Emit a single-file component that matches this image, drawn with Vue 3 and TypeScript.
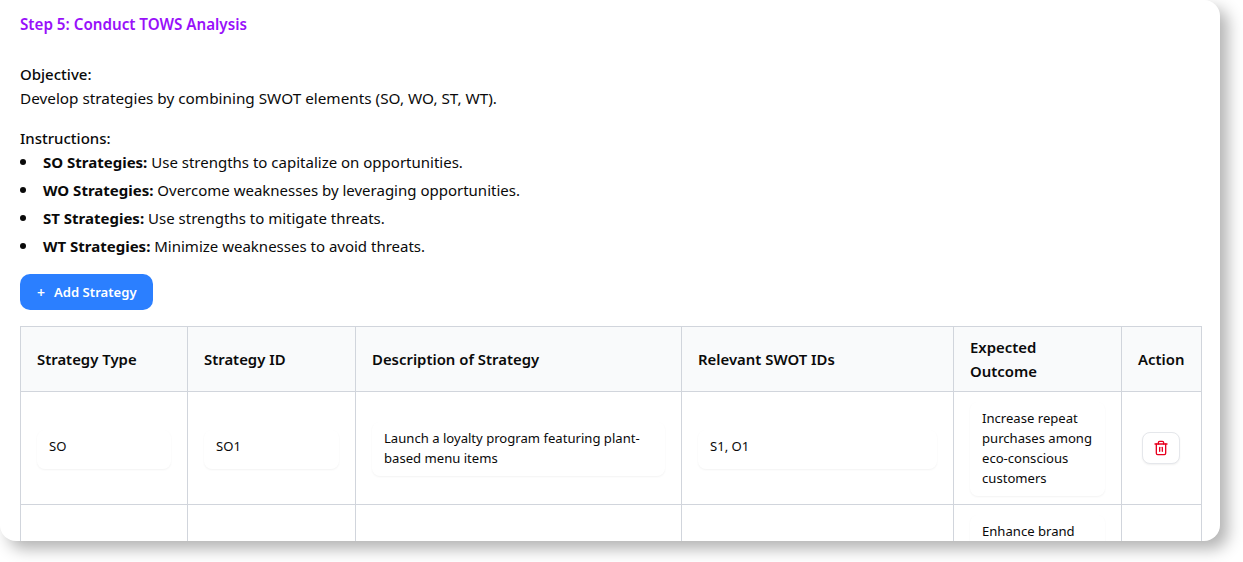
<script setup lang="ts">
interface Row { type: string; id: string; desc: string; swot: string; outcome: string }
const rows: Row[] = [
  { type: 'SO', id: 'SO1', desc: 'Launch a loyalty program featuring plant-based menu items', swot: 'S1, O1', outcome: 'Increase repeat purchases among eco-conscious customers' },
  { type: '', id: '', desc: '', swot: '', outcome: 'Enhance brand' },
]
const items = [
  { label: 'SO Strategies:', text: 'Use strengths to capitalize on opportunities.' },
  { label: 'WO Strategies:', text: 'Overcome weaknesses by leveraging opportunities.' },
  { label: 'ST Strategies:', text: 'Use strengths to mitigate threats.' },
  { label: 'WT Strategies:', text: 'Minimize weaknesses to avoid threats.' },
]
</script>

<template>
  <div class="page">
    <section class="card">
      <h2 class="title">Step 5: Conduct TOWS Analysis</h2>
      <p class="label obj">Objective:</p>
      <p class="body">Develop strategies by combining SWOT elements (SO, WO, ST, WT).</p>
      <p class="label ins">Instructions:</p>
      <ul class="list">
        <li v-for="it in items" :key="it.label"><strong>{{ it.label }}</strong> {{ it.text }}</li>
      </ul>
      <button class="add"><span class="plus">+</span>Add Strategy</button>
      <table class="grid">
        <colgroup>
          <col class="c1" /><col class="c2" /><col class="c3" />
          <col class="c4" /><col class="c5" /><col class="c6" />
        </colgroup>
        <thead>
          <tr>
            <th>Strategy Type</th><th>Strategy ID</th><th>Description of Strategy</th>
            <th>Relevant SWOT IDs</th><th>Expected Outcome</th><th>Action</th>
          </tr>
        </thead>
        <tbody>
          <tr v-for="(r, i) in rows" :key="i">
            <td><div v-if="r.type" class="box one">{{ r.type }}</div></td>
            <td><div v-if="r.id" class="box one">{{ r.id }}</div></td>
            <td><div v-if="r.desc" class="box">{{ r.desc }}</div></td>
            <td><div v-if="r.swot" class="box one">{{ r.swot }}</div></td>
            <td><div class="box">{{ r.outcome }}</div></td>
            <td class="act">
              <button v-if="i === 0" class="del" aria-label="Delete">
                <svg width="16" height="16" viewBox="0 0 24 24" fill="none" stroke="currentColor" stroke-width="2" stroke-linecap="round" stroke-linejoin="round">
                  <path d="M3 6h18" /><path d="M19 6v14a2 2 0 0 1-2 2H7a2 2 0 0 1-2-2V6" /><path d="M8 6V4a2 2 0 0 1 2-2h4a2 2 0 0 1 2 2v2" /><path d="M10 11v6" /><path d="M14 11v6" />
                </svg>
              </button>
            </td>
          </tr>
        </tbody>
      </table>
    </section>
  </div>
</template>

<style>
html, body { margin: 0; background: #fff; overflow: hidden; }
</style>

<style scoped>
.page { width: 1243px; height: 562px; overflow: hidden; font-family: "Noto Sans", sans-serif; color: #0a0a0a; }
.card {
  box-sizing: border-box; width: 1220px; height: 541px; padding: 14px 18px 0 20px; overflow: hidden;
  background: #fff; border-radius: 0 16px 16px 16px;
  box-shadow: 8px 8px 16px rgba(0, 0, 0, 0.3);
}
p, h2, ul { margin: 0; }
.title { font-size: 15.2px; line-height: 21px; font-weight: 600; color: #9810fa; }
.label, .body { font-size: 15px; line-height: 24px; }
.body { font-size: 15.3px; }
.label { font-weight: 500; }
.obj { margin-top: 27px; }
.ins { margin-top: 16px; }
.list { padding: 0 0 0 23px; list-style: none; font-size: 15px; line-height: 24px; }
.list li { position: relative; margin-bottom: 4px; }
.list li::before {
  content: ""; position: absolute; left: -23px; top: 9px; width: 6px; height: 6px; border-radius: 50%; background: #0a0a0a;
}
.list strong { font-weight: 700; }
.add {
  display: flex; align-items: center; margin-top: 16px; width: 133px; height: 36px; padding: 0 0 0 17px;
  background: #2b7fff; color: #fff; border: 0; border-radius: 10px; font: 600 13.1px "Noto Sans", sans-serif;
}
.plus { margin-right: 9px; font-size: 14px; }
.grid { margin-top: 16px; width: 1182px; table-layout: fixed; border-collapse: collapse; font-size: 13.1px; }
.c1 { width: 167px; } .c2 { width: 168px; } .c3 { width: 326px; }
.c4 { width: 272px; } .c5 { width: 168px; } .c6 { width: 80px; }
th, td { border: 1px solid #d1d5dc; }
th {
  height: 64px; padding: 0 16px; background: #f9fafb; text-align: left; font-size: 14.9px; line-height: 24px; font-weight: 600;
}
td { padding: 10px 16px 8px; line-height: 20px; vertical-align: middle; }
.box {
  box-sizing: border-box; padding: 6px 12px 8px; border-radius: 8px; background: #fff; min-height: 39px;
  box-shadow: 0 1px 2px rgba(0, 0, 0, 0.05);
}
.act { text-align: center; padding: 0; }
.del {
  display: inline-flex; align-items: center; justify-content: center; width: 38px; height: 32px; margin-right: 1px; padding: 0;
  background: #fff; color: #e8001f; border: 1px solid #e5e7eb; border-radius: 8px; box-shadow: 0 1px 2px rgba(0, 0, 0, 0.06);
}
</style>
